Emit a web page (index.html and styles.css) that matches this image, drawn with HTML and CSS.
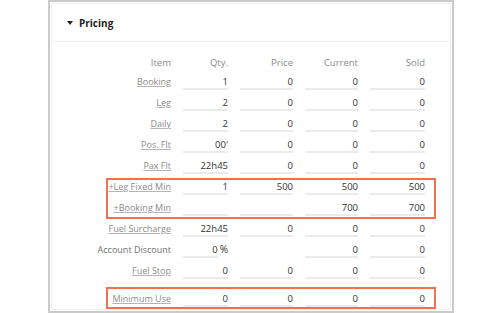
FILE: index.html
```html
<!DOCTYPE html>
<html lang="en">
<head>
    <meta charset="UTF-8">
    <meta name="viewport" content="width=device-width, initial-scale=1.0">
    <title>Pricing</title>
    <link rel="stylesheet" href="styles.css">
</head>
<body>
    <div class="panel">
        <div class="card">
            <div class="card-header">
                <span class="caret"></span>
                <h2>Pricing</h2>
            </div>
            <div class="card-body">
                <div class="rows">
                    <div class="row head">
                        <span>Item</span><span>Qty.</span><span>Price</span><span>Current</span><span>Sold</span>
                    </div>
                    <div class="row">
                        <a class="item">Booking</a><span class="field">1</span><span class="field">0</span><span class="field">0</span><span class="field">0</span>
                    </div>
                    <div class="row">
                        <a class="item">Leg</a><span class="field">2</span><span class="field">0</span><span class="field">0</span><span class="field">0</span>
                    </div>
                    <div class="row">
                        <a class="item">Daily</a><span class="field">2</span><span class="field">0</span><span class="field">0</span><span class="field">0</span>
                    </div>
                    <div class="row">
                        <a class="item">Pos. Flt</a><span class="field">00'</span><span class="field">0</span><span class="field">0</span><span class="field">0</span>
                    </div>
                    <div class="row">
                        <a class="item">Pax Flt</a><span class="field">22h45</span><span class="field">0</span><span class="field">0</span><span class="field">0</span>
                    </div>
                    <!-- minimums -->
                    <div class="box">
                        <div class="row">
                            <a class="item">+Leg Fixed Min</a><span class="field">1</span><span class="field">500</span><span class="field">500</span><span class="field">500</span>
                        </div>
                        <div class="row">
                            <a class="item">+Booking Min</a><span class="field"></span><span class="field"></span><span class="field">700</span><span class="field">700</span>
                        </div>
                    </div>
                    <div class="row">
                        <a class="item">Fuel Surcharge</a><span class="field">22h45</span><span class="field">0</span><span class="field">0</span><span class="field">0</span>
                    </div>
                    <div class="row">
                        <span class="item plain">Account Discount</span>
                        <span class="pct"><span class="field">0</span><span class="unit">%</span></span>
                        <span></span><span class="field">0</span><span class="field">0</span>
                    </div>
                    <div class="row">
                        <a class="item">Fuel Stop</a><span class="field">0</span><span class="field">0</span><span class="field">0</span><span class="field">0</span>
                    </div>
                    <div class="box single">
                        <div class="row">
                            <a class="item">Minimum Use</a><span class="field">0</span><span class="field">0</span><span class="field">0</span><span class="field">0</span>
                        </div>
                    </div>
                </div>
            </div>
        </div>
    </div>
</body>
</html>
```

FILE: styles.css
```css
/* base */
* {
    box-sizing: border-box;
    margin: 0;
    padding: 0;
}
html, body {
    height: 100%;
    overflow: hidden;
    background: #fff;
    font-family: "Open Sans", "Liberation Sans", sans-serif;
}

/* panel */
.panel {
    margin-left: 48px;
    width: 406px;
    height: 313px;
    border: 2px solid #cacaca;
    padding: 1px;
}
.card {
    height: 100%;
    border: 1px solid #efefef;
}
.card-header {
    display: flex;
    align-items: center;
    height: 38px;
    padding-left: 15px;
    border-bottom: 1px solid #efefef;
}
.caret {
    width: 0;
    height: 0;
    border-left: 3px solid transparent;
    border-right: 3px solid transparent;
    border-top: 4px solid #222;
    margin-right: 6px;
}
.card-header h2 {
    font-size: 10px;
    font-weight: 700;
    color: #222;
}
.card-body {
    padding: 14px 0 0 54px;
}

/* table */
.rows {
    display: flex;
    flex-direction: column;
    gap: 6px;
    width: 330px;
}
.row {
    display: grid;
    grid-template-columns: 63px 45px 53px 53px 55px;
    column-gap: 12px;
    padding: 0 11px 0 2px;
    font-size: 9px;
    line-height: 13px;
}
.head {
    color: #8a8a8a;
    font-size: 9.5px;
    text-align: right;
}
.item {
    justify-self: end;
    color: #8c8c8c;
    text-decoration: underline;
    text-decoration-color: #b5b5b5;
    text-align: right;
    white-space: nowrap;
}
.item.plain {
    color: #707070;
    text-decoration: none;
}
.field {
    height: 15px;
    border-bottom: 2px solid #ebebeb;
    text-align: right;
    font-size: 9.5px;
    color: #333;
}
.pct {
    display: flex;
}
.pct .field {
    flex: 1;
}
.unit {
    margin-left: 2px;
    font-size: 10px;
    color: #333;
}

/* highlighted rows */
.box {
    display: flex;
    flex-direction: column;
    gap: 6px;
    border: 2px solid #f0704f;
    margin: -2px 0 -3px;
    padding-bottom: 1px;
}
.box .row {
    padding: 0 9px 0 0;
}
.box.single {
    margin: 2px 0 0;
    padding: 3px 0 0;
}
```
